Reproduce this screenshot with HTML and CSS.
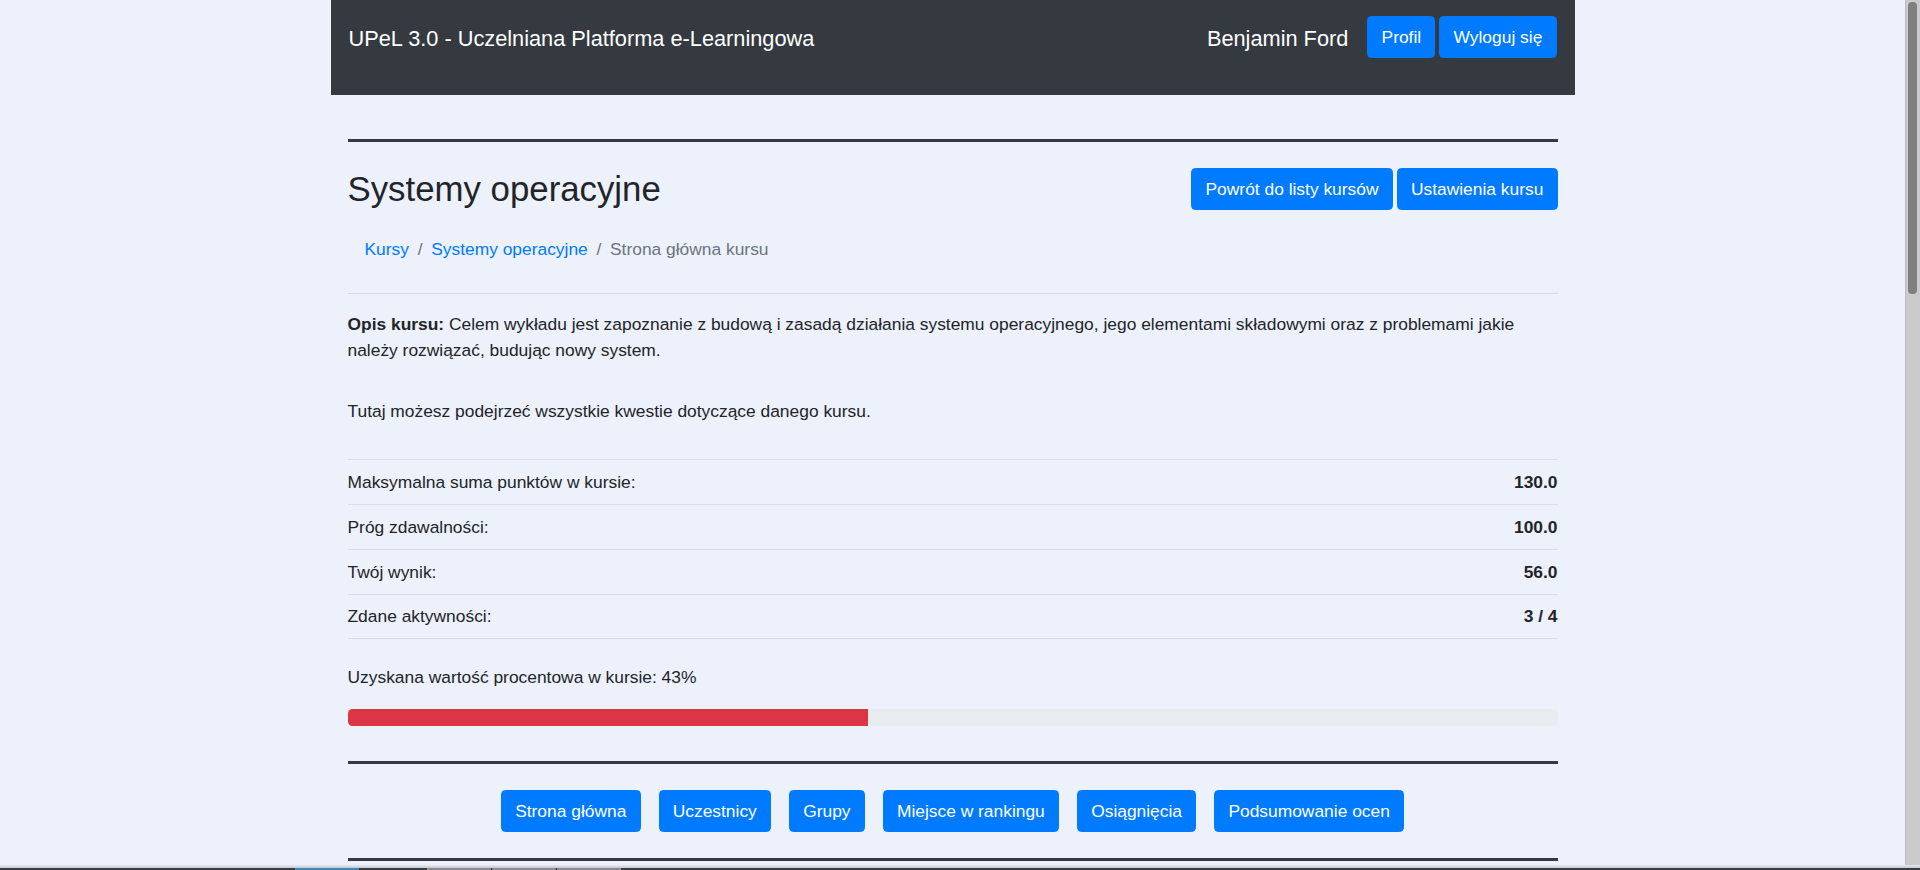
FILE: index.html
```html
<!DOCTYPE html>
<html lang="pl">
<head>
<meta charset="utf-8">
<title>Systemy operacyjne - UPeL 3.0</title>
<link rel="stylesheet" href="styles.css">
</head>
<body>
<div class="container">
  <nav class="navbar">
    <span class="brand">UPeL 3.0 - Uczelniana Platforma e-Learningowa</span>
    <div class="user">
      <span class="user-name">Benjamin Ford</span>
      <a class="btn" href="#">Profil</a>
      <a class="btn" href="#">Wyloguj się</a>
    </div>
  </nav>

  <main class="content">
    <hr class="rule-thick rule-top">

    <div class="course-head">
      <h2 class="course-title">Systemy operacyjne</h2>
      <div class="head-actions">
        <a class="btn" href="#">Powrót do listy kursów</a>
        <a class="btn" href="#">Ustawienia kursu</a>
      </div>
    </div>

    <ol class="breadcrumb">
      <li class="crumb"><a href="#">Kursy</a></li>
      <li class="crumb"><a href="#">Systemy operacyjne</a></li>
      <li class="crumb active">Strona główna kursu</li>
    </ol>

    <hr class="rule-thin">

    <p class="desc"><strong>Opis kursu:</strong> Celem wykładu jest zapoznanie z budową i zasadą działania systemu operacyjnego, jego elementami składowymi oraz z problemami jakie należy rozwiązać, budując nowy system.</p>

    <p class="intro">Tutaj możesz podejrzeć wszystkie kwestie dotyczące danego kursu.</p>

    <table class="stats">
      <tbody>
        <tr><td>Maksymalna suma punktów w kursie:</td><td class="val">130.0</td></tr>
        <tr><td>Próg zdawalności:</td><td class="val">100.0</td></tr>
        <tr><td>Twój wynik:</td><td class="val">56.0</td></tr>
        <tr><td>Zdane aktywności:</td><td class="val">3 / 4</td></tr>
      </tbody>
    </table>

    <p class="percent">Uzyskana wartość procentowa w kursie: 43%</p>
    <div class="progress"><div class="progress-bar" style="width: 43%"></div></div>

    <hr class="rule-thick rule-nav">

    <div class="course-nav">
      <a class="btn" href="#">Strona główna</a>
      <a class="btn" href="#">Uczestnicy</a>
      <a class="btn" href="#">Grupy</a>
      <a class="btn" href="#">Miejsce w rankingu</a>
      <a class="btn" href="#">Osiągnięcia</a>
      <a class="btn" href="#">Podsumowanie ocen</a>
    </div>

    <hr class="rule-thick rule-nav">
  </main>
</div>

<div class="scrollbar"><div class="scroll-thumb"></div></div>

<div class="window-edge">
  <span class="seg seg-blue"></span>
  <span class="seg seg-grey"></span>
  <span class="seg seg-grey"></span>
  <span class="seg seg-grey"></span>
</div>
</body>
</html>
```

FILE: styles.css
```css
html {
  background: #edf1fb;
}

body {
  margin: 0;
  padding-right: 15px;
  min-height: 2550px;
  background: #edf1fb;
  color: #212529;
  font-family: "Liberation Sans", Arial, sans-serif;
  font-size: 17.4px;
  line-height: 1.5;
}

.container {
  width: 1244px;
  margin: 0 auto;
}

a {
  color: #007bff;
  text-decoration: none;
}

/* ---------- navbar ---------- */
.navbar {
  height: 95px;
  box-sizing: border-box;
  padding: 16px 18px 0 18px;
  background: #343a40;
  display: flex;
  justify-content: space-between;
  align-items: flex-start;
}

.brand {
  color: #fff;
  font-size: 21.75px;
  line-height: 42px;
  padding-top: 2px;
}

.user {
  display: flex;
  align-items: flex-start;
  gap: 4px;
}

.user-name {
  color: #fff;
  font-size: 21.75px;
  line-height: 42px;
  padding-top: 2px;
  margin-right: 15px;
}

/* ---------- buttons ---------- */
.btn {
  display: inline-block;
  padding: 6.8px 13.2px;
  border: 1px solid #007bff;
  border-radius: 4.4px;
  background: #007bff;
  color: #fff;
  font-size: 17.4px;
  line-height: 26.1px;
  white-space: nowrap;
}

/* ---------- content ---------- */
.content {
  padding: 0 17px;
}

.rule-thick {
  height: 0;
  margin: 0;
  border: 0;
  border-top: 3px solid #343a40;
}

.rule-top {
  margin-top: 44px;
}

.course-head {
  margin-top: 26px;
  display: flex;
  justify-content: space-between;
  align-items: center;
}

.course-title {
  margin: 0;
  font-size: 34.8px;
  font-weight: 400;
  line-height: 42px;
}

.head-actions {
  display: flex;
  gap: 4px;
}

.breadcrumb {
  list-style: none;
  margin: 13px 0 18px 0;
  padding: 13px 17px;
  display: flex;
}

.crumb + .crumb::before {
  content: "/";
  color: #6c757d;
  padding: 0 8.7px;
}

.crumb.active {
  color: #6c757d;
}

.rule-thin {
  height: 0;
  margin: 0;
  border: 0;
  border-top: 1px solid #d6dae3;
}

.desc {
  margin: 17px 0 0 0;
}

.intro {
  margin: 35px 0 0 0;
}

.stats {
  width: 100%;
  margin-top: 35px;
  border-collapse: collapse;
}

.stats td {
  padding: 8.8px 0;
  border-top: 1px solid #d9dde5;
  line-height: 26.1px;
}

.stats tr:last-child td {
  border-bottom: 1px solid #d9dde5;
}

.stats .val {
  text-align: right;
  font-weight: 700;
}

.percent {
  margin: 25px 0 0 0;
}

.progress {
  margin-top: 19px;
  height: 17px;
  border-radius: 4.4px;
  background: #e9ecef;
  overflow: hidden;
  display: flex;
}

.progress-bar {
  background: #dc3545;
}

.rule-nav {
  margin-top: 35px;
}

.course-nav {
  margin-top: 26px;
  display: flex;
  justify-content: center;
  gap: 18px;
}

.course-nav + .rule-nav {
  margin-top: 26px;
}

/* ---------- browser scrollbar (window chrome) ---------- */
.scrollbar {
  position: fixed;
  top: 0;
  right: 0;
  width: 15px;
  height: 100vh;
  box-sizing: border-box;
  background: #cbcbcb;
  border-left: 1px solid #bcbcbc;
  padding: 2px 3px 0 2px;
}

.scroll-thumb {
  height: 292px;
  border-radius: 4px;
  background: #7f7f7f;
}

/* ---------- bottom window edge (screenshot chrome) ---------- */
.window-edge {
  position: fixed;
  left: 0;
  right: 0;
  bottom: 0;
  z-index: 2;
  height: 5px;
  background: linear-gradient(#e6e9f1, #c4c8d0);
  border-bottom: 2px solid #3a3d42;
  box-sizing: border-box;
  display: flex;
  align-items: flex-end;
  padding-left: 295px;
}

.seg {
  display: block;
  height: 2px;
  margin-bottom: -2px;
  width: 64px;
}

.seg-blue {
  background: #3f86b0;
  margin-right: 68px;
}

.seg-grey {
  background: #8a8a8a;
  margin-right: 1px;
}
```
